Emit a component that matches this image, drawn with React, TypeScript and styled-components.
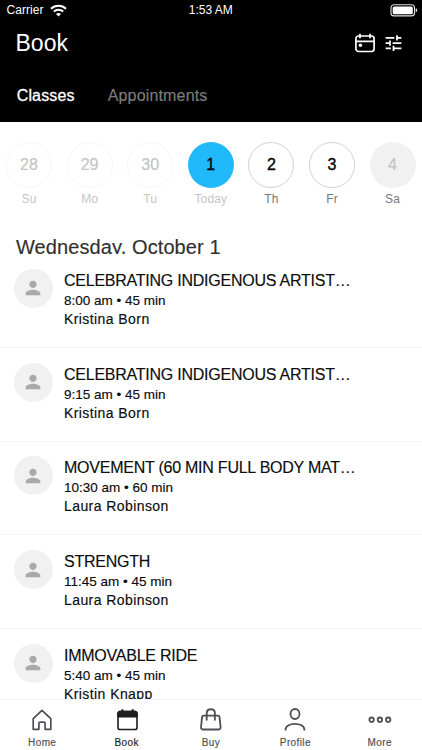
import React from 'react';
import styled, { createGlobalStyle } from 'styled-components';

const GlobalStyle = createGlobalStyle`
  * { box-sizing: border-box; }
  body {
    margin: 0;
    background: #fff;
    font-family: "Liberation Sans", Arial, Helvetica, sans-serif;
    overflow: hidden;
  }
  svg { display: block; flex: none; }
`;

const Screen = styled.div`
  display: flex;
  flex-direction: column;
  width: 422px;
  height: 750px;
  background: #fff;
  overflow: hidden;
`;

const Header = styled.header`
  flex: none;
  height: 122px;
  background: #000;
  color: #fff;
`;

const StatusBar = styled.div`
  display: grid;
  grid-template-columns: 1fr auto 1fr;
  align-items: center;
  height: 20px;
  padding: 0 4px 0 6.5px;
  font-size: 12px;
  line-height: 20px;
`;

const Carrier = styled.div`
  display: flex;
  align-items: center;
  gap: 6.5px;
  letter-spacing: 0.05px;
`;

const Clock = styled.span`
  margin-left: -3px;
  line-height: 19px;
`;

const BatterySlot = styled.div`
  display: flex;
  justify-content: flex-end;
`;

const TitleBar = styled.div`
  display: flex;
  align-items: center;
  justify-content: space-between;
  height: 45px;
  padding: 0 18px 0 15.5px;
`;

const PageTitle = styled.h1`
  margin: 0;
  font-size: 23px;
  font-weight: 400;
  line-height: 44px;
`;

const Actions = styled.div`
  display: flex;
  align-items: center;
  gap: 7px;
`;

const Tabs = styled.nav`
  display: flex;
  align-items: center;
  gap: 33px;
  height: 58px;
  padding: 4px 0 0 16.7px;
`;

const Tab = styled.span<{ $active?: boolean }>`
  color: ${(p) => (p.$active ? '#fff' : '#7d7d7d')};
  font-size: 16px;
  letter-spacing: 0.16px;
  line-height: 20px;
  -webkit-text-stroke: ${(p) => (p.$active ? '0.3px #fff' : '0.15px #7d7d7d')};
`;

const DayStrip = styled.div`
  flex: none;
  display: grid;
  grid-template-columns: repeat(7, 60.6px);
  height: 111px;
  margin-left: -1.3px;
  padding-top: 19.5px;
`;

const Day = styled.div`
  display: flex;
  flex-direction: column;
  align-items: center;
`;

type DayTone = 'past' | 'today' | 'open' | 'closed';

const circle: Record<DayTone, string> = {
  past: 'border: 1px solid #f6f6f6; color: #c4c4c4; -webkit-text-stroke: 0.2px #c4c4c4;',
  today: 'background: #20b9fb; color: #050505; -webkit-text-stroke: 0.35px #050505;',
  open: 'border: 1px solid #d3d3d3; color: #050505; -webkit-text-stroke: 0.35px #050505;',
  closed: 'background: #f1f1f1; color: #c2c2c2; -webkit-text-stroke: 0.2px #c2c2c2;',
};

const DayNumber = styled.div<{ $tone: DayTone }>`
  width: 46px;
  height: 46px;
  border-radius: 50%;
  font-size: 16px;
  line-height: ${(p) => (p.$tone === 'past' || p.$tone === 'open' ? 44 : 46)}px;
  text-align: center;
  ${(p) => circle[p.$tone]}
`;

const DayName = styled.div<{ $muted: boolean }>`
  margin-top: 4px;
  color: ${(p) => (p.$muted ? '#c6c6c6' : '#777')};
  font-size: 12px;
  letter-spacing: 0.1px;
  line-height: 14px;
`;

const DateHeading = styled.h2`
  flex: none;
  height: 20.5px;
  margin: 0 0 0.5px;
  padding-left: 16px;
  overflow: hidden;
  color: #303030;
  font-size: 20px;
  font-weight: 400;
  letter-spacing: 0.1px;
  line-height: 28px;
  -webkit-text-stroke: 0.15px #303030;
`;

const ClassList = styled.div`
  flex: 1;
  min-height: 0;
  overflow: hidden;
`;

const ClassRow = styled.article`
  display: flex;
  gap: 11.3px;
  height: 93.75px;
  padding: 14.9px 20px 0 13.7px;
  border-bottom: 1px solid #f4f4f4;
`;

const Avatar = styled.div`
  flex: none;
  display: flex;
  align-items: center;
  justify-content: center;
  width: 39px;
  height: 39px;
  border-radius: 50%;
  background: #f1f1f1;
`;

const ClassInfo = styled.div`
  padding-top: 1px;
  color: #0c0c0c;
  white-space: nowrap;
  -webkit-text-stroke: 0.15px #0c0c0c;
`;

const ClassTitle = styled.div`
  font-size: 16px;
  letter-spacing: -0.24px;
  line-height: 21px;
`;

const ClassTime = styled.div`
  font-size: 13.5px;
  line-height: 19px;
`;

const Instructor = styled.div`
  font-size: 14px;
  letter-spacing: 0.42px;
  line-height: 19px;
`;

const BottomNav = styled.nav`
  flex: none;
  display: grid;
  grid-template-columns: repeat(5, 1fr);
  height: 51px;
  border-top: 1px solid #f2f2f2;
  background: #fff;
`;

const NavItem = styled.div<{ $active?: boolean }>`
  display: flex;
  flex-direction: column;
  align-items: center;
  padding-top: 7px;
  color: ${(p) => (p.$active ? '#1d1d22' : '#4e4e56')};
  font-size: 10px;
  letter-spacing: 0.4px;
  line-height: 12px;
  -webkit-text-stroke: 0.15px currentColor;

  svg { margin-bottom: 4px; }
`;

const WifiIcon = () => (
  <svg width="17" height="13" viewBox="0 0 17 13" fill="none" stroke="#fff" strokeWidth="2">
    <path d="M1 4.7C5.2.7 11.8.7 16 4.7" />
    <path d="M3.8 7.5c2.7-2.5 6.7-2.5 9.4 0" />
    <path d="M8.5 12.5 6 10c1.4-1.3 3.6-1.3 5 0Z" fill="#fff" stroke="none" />
  </svg>
);

const BatteryIcon = () => (
  <svg width="28" height="13" viewBox="0 0 28 13">
    <rect x="1" y=".7" width="23.5" height="11.2" rx="3" fill="none" stroke="#e0e0e0" strokeWidth="1.1" />
    <rect x="2.7" y="2.4" width="20.1" height="7.8" rx="1.5" fill="#fff" />
    <path d="M25.7 4.3c2 .6 2 3.4 0 4Z" fill="#e0e0e0" />
  </svg>
);

const CalendarIcon = () => (
  <svg width="22" height="20" viewBox="0 0 22 20" fill="none" stroke="#fff" strokeWidth="1.7">
    <rect x="1.9" y="3" width="18.2" height="15.5" rx="2.7" />
    <path d="M2 8.3h18M6 .8v4.4M16 .8v4.4" />
    <circle cx="6.4" cy="12.2" r="1.7" fill="#fff" stroke="none" />
  </svg>
);

const TuneIcon = () => (
  <svg width="21" height="22" viewBox="0 0 24 24" fill="#fff">
    <path d="M3 17v2h6v-2H3zM3 5v2h10V5H3zm10 16v-2h8v-2h-8v-2h-2v6h2zM7 9v2H3v2h4v2h2V9H7zm14 4v-2H11v2h10zm-6-4h2V7h4V5h-4V3h-2v6z" />
  </svg>
);

const PersonIcon = () => (
  <svg width="22" height="22" viewBox="0 0 24 24" fill="#a9a9a9">
    <path d="M12 12c2.2 0 4-1.8 4-4s-1.8-4-4-4-4 1.8-4 4 1.8 4 4 4zm0 2c-2.7 0-8 1.3-8 4v2h16v-2c0-2.7-5.3-4-8-4z" />
  </svg>
);

const HomeIcon = () => (
  <svg width="24" height="26" viewBox="0 0 24 26" fill="none" stroke="currentColor" strokeWidth="1.7" strokeLinejoin="round">
    <path d="M3.2 22.3V11.7L12 3.3l8.8 8.4v10.6h-5.7v-6.1c0-.7-.4-1.1-1.1-1.1h-4c-.7 0-1.1.4-1.1 1.1v6.1Z" />
  </svg>
);

const BookIcon = () => (
  <svg width="24" height="26" viewBox="0 0 24 26" fill="none" stroke="currentColor" strokeWidth="1.6" strokeLinejoin="round">
    <rect x="3" y="4.6" width="19" height="17.9" rx="2.1" />
    <path d="M3 6.3 4.4 4.6h16.2L22 6.3v3.5H3Z" fill="currentColor" />
    <path d="M7.3 2.3v3M17.7 2.3v3" strokeWidth="2" />
  </svg>
);

const BuyIcon = () => (
  <svg width="24" height="26" viewBox="0 0 24 26" fill="none" stroke="currentColor" strokeWidth="1.8" strokeLinecap="round">
    <path d="M4.5 8.6h14.6c.8 0 1.3.5 1.4 1.2l1.1 10.5c.1 1.3-.8 2.2-2.1 2.2H4.1c-1.3 0-2.2-.9-2.1-2.2L3.1 9.8c.1-.7.6-1.2 1.4-1.2Z" />
    <path d="M7.7 12.8V6.2c0-5.3 8.2-5.3 8.2 0v6.6" />
  </svg>
);

const ProfileIcon = () => (
  <svg width="24" height="26" viewBox="0 0 24 26" fill="none" stroke="currentColor" strokeWidth="1.8">
    <ellipse cx="12" cy="7" rx="4.5" ry="5" />
    <path d="M2.6 23.4v-.8c0-7.6 18.8-7.6 18.8 0v.8" />
  </svg>
);

const MoreIcon = () => (
  <svg width="24" height="26" viewBox="0 0 24 26" fill="none" stroke="currentColor" strokeWidth="1.8">
    <circle cx="3.6" cy="12.7" r="2.2" />
    <circle cx="11.9" cy="12.7" r="2.2" />
    <circle cx="20.2" cy="12.7" r="2.2" />
  </svg>
);

const days: { number: number; name: string; tone: DayTone }[] = [
  { number: 28, name: 'Su', tone: 'past' },
  { number: 29, name: 'Mo', tone: 'past' },
  { number: 30, name: 'Tu', tone: 'past' },
  { number: 1, name: 'Today', tone: 'today' },
  { number: 2, name: 'Th', tone: 'open' },
  { number: 3, name: 'Fr', tone: 'open' },
  { number: 4, name: 'Sa', tone: 'closed' },
];

const classes = [
  { title: 'CELEBRATING INDIGENOUS ARTIST…', time: '8:00 am • 45 min', who: 'Kristina Born' },
  { title: 'CELEBRATING INDIGENOUS ARTIST…', time: '9:15 am • 45 min', who: 'Kristina Born' },
  { title: 'MOVEMENT (60 MIN FULL BODY MAT…', time: '10:30 am • 60 min', who: 'Laura Robinson' },
  { title: 'STRENGTH', time: '11:45 am • 45 min', who: 'Laura Robinson' },
  { title: 'IMMOVABLE RIDE', time: '5:40 am • 45 min', who: 'Kristin Knapp' },
];

export default function App() {
  return (
    <>
      <GlobalStyle />
      <Screen>
        <Header>
          <StatusBar>
            <Carrier>Carrier <WifiIcon /></Carrier>
            <Clock>1:53 AM</Clock>
            <BatterySlot><BatteryIcon /></BatterySlot>
          </StatusBar>
          <TitleBar>
            <PageTitle>Book</PageTitle>
            <Actions><CalendarIcon /><TuneIcon /></Actions>
          </TitleBar>
          <Tabs>
            <Tab $active>Classes</Tab>
            <Tab>Appointments</Tab>
          </Tabs>
        </Header>
        <DayStrip>
          {days.map((d) => (
            <Day key={d.number}>
              <DayNumber $tone={d.tone}>{d.number}</DayNumber>
              <DayName $muted={d.tone === 'past' || d.tone === 'today'}>{d.name}</DayName>
            </Day>
          ))}
        </DayStrip>
        <DateHeading>Wednesday, October 1</DateHeading>
        <ClassList>
          {classes.map((c) => (
            <ClassRow key={c.time}>
              <Avatar><PersonIcon /></Avatar>
              <ClassInfo>
                <ClassTitle>{c.title}</ClassTitle>
                <ClassTime>{c.time}</ClassTime>
                <Instructor>{c.who}</Instructor>
              </ClassInfo>
            </ClassRow>
          ))}
        </ClassList>
        <BottomNav>
          <NavItem><HomeIcon />Home</NavItem>
          <NavItem $active><BookIcon />Book</NavItem>
          <NavItem><BuyIcon />Buy</NavItem>
          <NavItem><ProfileIcon />Profile</NavItem>
          <NavItem><MoreIcon />More</NavItem>
        </BottomNav>
      </Screen>
    </>
  );
}
